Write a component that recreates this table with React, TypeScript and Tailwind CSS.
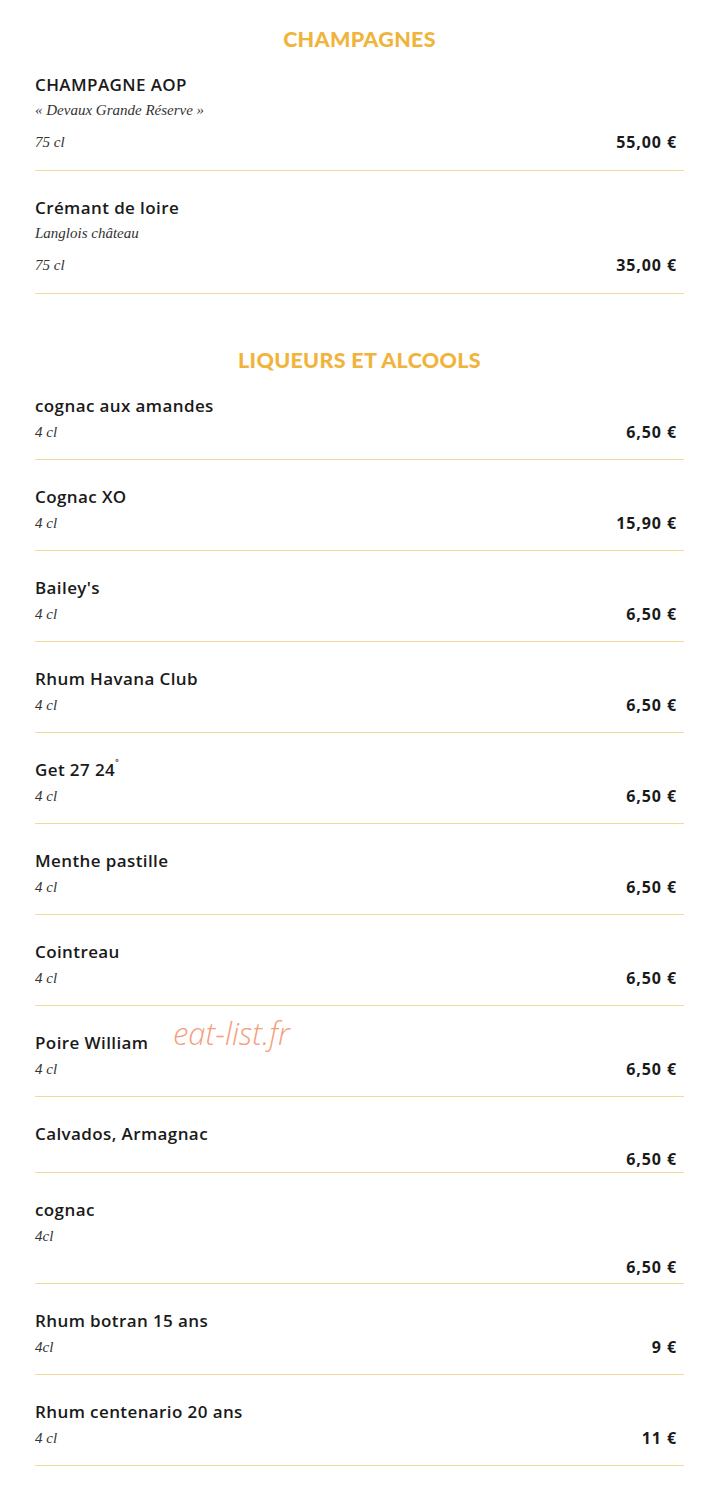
import React from "react";

type Item = {
  name: React.ReactNode;
  desc?: string;
  vol?: string;
  price: string;
  kind: "champ" | "std" | "noSub" | "descPrice";
  first?: boolean;
};

const sans = "font-['Open_Sans','Lato',sans-serif]";
const head = "font-['Lato','Inter',sans-serif]";
const serif = "font-['Liberation_Serif','DejaVu_Serif',serif]";
const sub = `${serif} italic text-[15px] text-[#333]`;

function Row({ item }: { item: Item }) {
  const pt = item.first ? "pt-[22px]" : "pt-[25px]";
  const name = (
    <div className={`${sans} h-[24px] leading-[24px] text-[17px] font-semibold text-[#1a1a1a] tracking-[0.4px]`}>{item.name}</div>
  );
  const price = (
    <span className={`${sans} text-[16px] font-bold text-[#1a1a1a] pr-[7px] tracking-[0.9px]`}>{item.price}</span>
  );
  if (item.kind === "champ") {
    return (
      <div className={`${pt} pb-[9px] border-b border-[#f5d89c]`}>
        {name}
        <div className={`${sub} h-[26px] leading-[26px]`}>{item.desc}</div>
        <div className="h-[38px] flex items-center justify-between">
          <span className={sub}>{item.vol}</span>
          {price}
        </div>
      </div>
    );
  }
  if (item.kind === "noSub") {
    return (
      <div className={`${pt} pb-0 border-b border-[#f5d89c]`}>
        {name}
        <div className="h-[26px] flex items-center justify-end">{price}</div>
      </div>
    );
  }
  if (item.kind === "descPrice") {
    return (
      <div className={`${pt} pb-0 border-b border-[#f5d89c]`}>
        {name}
        <div className={`${sub} h-[28px] leading-[28px]`}>{item.desc}</div>
        <div className="h-[33px] flex items-center justify-end">{price}</div>
      </div>
    );
  }
  return (
    <div className={`${pt} pb-[13px] border-b border-[#f5d89c]`}>
      {name}
      <div className="h-[28px] flex items-center justify-between">
        <span className={sub}>{item.vol}</span>
        {price}
      </div>
    </div>
  );
}

const champagnes: Item[] = [
  { name: "CHAMPAGNE AOP", desc: "« Devaux Grande Réserve »", vol: "75 cl", price: "55,00 €", kind: "champ", first: true },
  { name: "Crémant de loire", desc: "Langlois château", vol: "75 cl", price: "35,00 €", kind: "champ" },
];

const liqueurs: Item[] = [
  { name: "cognac aux amandes", vol: "4 cl", price: "6,50 €", kind: "std", first: true },
  { name: "Cognac XO", vol: "4 cl", price: "15,90 €", kind: "std" },
  { name: "Bailey's", vol: "4 cl", price: "6,50 €", kind: "std" },
  { name: "Rhum Havana Club", vol: "4 cl", price: "6,50 €", kind: "std" },
  {
    name: (
      <>
        Get 27 24<sup className="text-[8px] align-super">°</sup>
      </>
    ),
    vol: "4 cl",
    price: "6,50 €",
    kind: "std",
  },
  { name: "Menthe pastille", vol: "4 cl", price: "6,50 €", kind: "std" },
  { name: "Cointreau", vol: "4 cl", price: "6,50 €", kind: "std" },
  { name: "Poire William", vol: "4 cl", price: "6,50 €", kind: "std" },
  { name: "Calvados, Armagnac", price: "6,50 €", kind: "noSub" },
  { name: "cognac", desc: "4cl", price: "6,50 €", kind: "descPrice" },
  { name: "Rhum botran 15 ans", vol: "4cl", price: "9 €", kind: "std" },
  { name: "Rhum centenario 20 ans", vol: "4 cl", price: "11 €", kind: "std" },
];

function Heading({ children }: { children: React.ReactNode }) {
  return (
    <h2 className={`${head} text-center text-[21.5px] font-black leading-[24px] h-[24px] text-[#f0b43c] tracking-[0.3px]`}>
      {children}
    </h2>
  );
}

export default function App() {
  return (
    <div className="relative w-[712px] h-[1500px] bg-white pt-[27px] pl-[35px] pr-[28px]">
      <Heading>CHAMPAGNES</Heading>
      {champagnes.map((it, i) => (
        <Row key={i} item={it} />
      ))}
      <div className="h-[54px]" />
      <Heading>LIQUEURS ET ALCOOLS</Heading>
      {liqueurs.map((it, i) => (
        <Row key={i} item={it} />
      ))}
      <div className="absolute left-[173px] top-[1012px] font-['Open_Sans',sans-serif] italic font-light text-[31px] text-[#f4a07e] leading-[42px]">
        eat-list.fr
      </div>
    </div>
  );
}
